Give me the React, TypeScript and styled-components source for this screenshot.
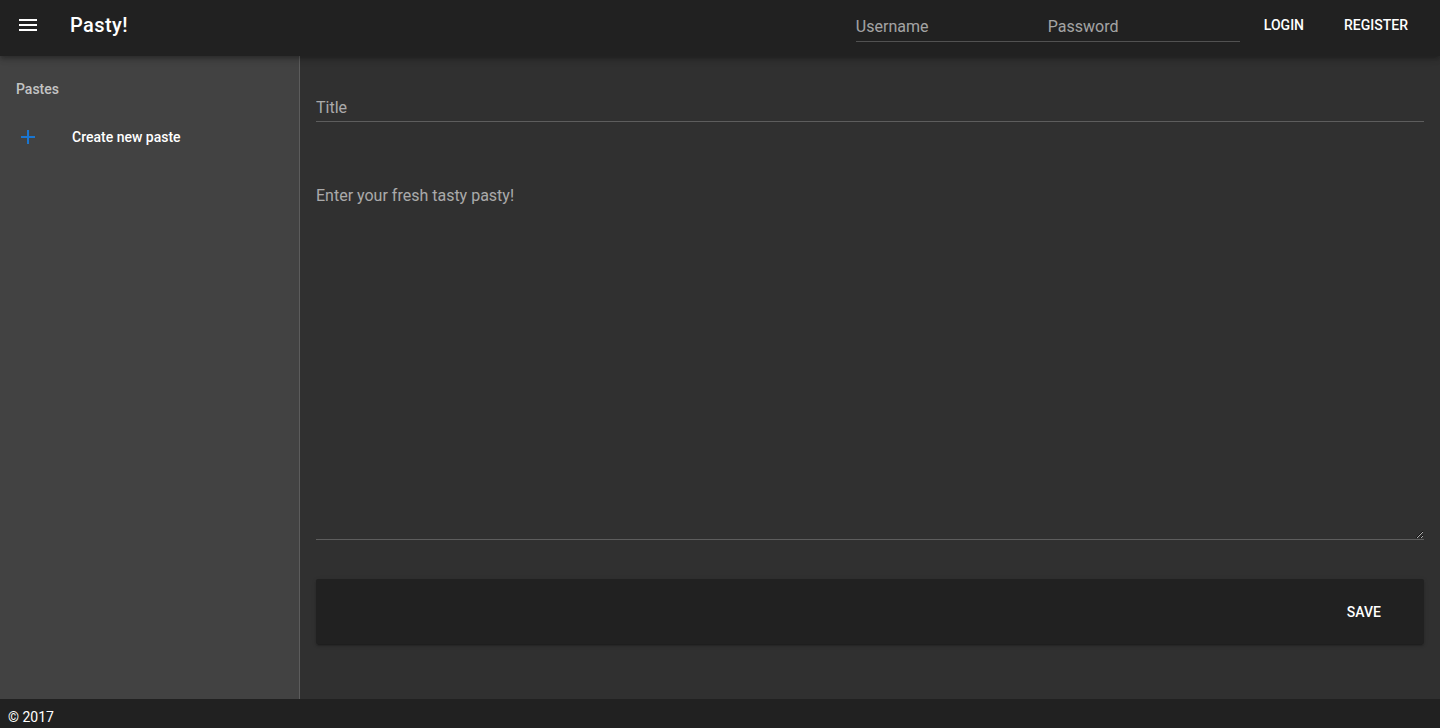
import styled, { createGlobalStyle } from 'styled-components';

const GlobalStyle = createGlobalStyle`
  html, body {
    margin: 0;
    padding: 0;
    height: 100%;
    background: #303030;
    font-family: Roboto, 'Noto Sans', sans-serif;
    color: #fff;
  }
  #root {
    height: 100%;
  }
  * {
    box-sizing: border-box;
  }
`;

const Page = styled.div`
  display: flex;
  flex-direction: column;
  height: 100vh;
`;

const Toolbar = styled.header`
  position: relative;
  z-index: 2;
  display: flex;
  align-items: center;
  height: 56px;
  flex-shrink: 0;
  padding: 0 16px 6px;
  background: #212121;
  box-shadow: 0 2px 4px -1px rgba(0, 0, 0, 0.2), 0 4px 5px 0 rgba(0, 0, 0, 0.14),
    0 1px 10px 0 rgba(0, 0, 0, 0.12);
`;

const MenuButton = styled.button`
  display: flex;
  align-items: center;
  justify-content: center;
  width: 24px;
  height: 24px;
  padding: 0;
  border: none;
  background: transparent;
  color: #fff;
  cursor: pointer;
`;

const Brand = styled.div`
  margin-left: 30px;
  font-size: 20px;
  font-weight: 500;
  letter-spacing: 0.02em;
`;

const Spacer = styled.div`
  flex: 1;
`;

const LoginFields = styled.div`
  display: flex;
  height: 34px;
  border-bottom: 1px solid rgba(255, 255, 255, 0.22);
`;

const TopInput = styled.input`
  width: 192px;
  height: 100%;
  padding: 4px 0 0;
  border: none;
  background: transparent;
  font-family: inherit;
  font-size: 16px;
  color: #fff;
  outline: none;
  &::placeholder {
    color: rgba(255, 255, 255, 0.6);
  }
`;

const FlatButton = styled.button`
  height: 36px;
  margin-left: 8px;
  padding: 0 16px;
  border: none;
  background: transparent;
  font-family: inherit;
  font-size: 14px;
  font-weight: 500;
  text-transform: uppercase;
  color: #fff;
  cursor: pointer;
`;

const Body = styled.div`
  display: flex;
  flex: 1;
  min-height: 0;
`;

const Sidebar = styled.aside`
  width: 300px;
  flex-shrink: 0;
  padding-top: 9px;
  background: #424242;
  border-right: 1px solid rgba(255, 255, 255, 0.14);
`;

const Subheader = styled.div`
  display: flex;
  align-items: center;
  height: 48px;
  padding: 0 16px;
  font-size: 14px;
  font-weight: 500;
  color: rgba(255, 255, 255, 0.7);
`;

const Tile = styled.a`
  display: flex;
  align-items: center;
  height: 48px;
  padding: 0 16px;
  font-size: 14px;
  font-weight: 500;
  color: #fff;
  text-decoration: none;
  cursor: pointer;
`;

const TileIcon = styled.div`
  display: flex;
  align-items: center;
  width: 56px;
  color: #1976d2;
`;

const Main = styled.main`
  flex: 1;
  padding: 0 16px;
  display: flex;
  flex-direction: column;
`;

const TitleInput = styled.input`
  width: 100%;
  height: 32px;
  margin-top: 34px;
  padding: 4px 0 0;
  border: none;
  border-bottom: 1px solid rgba(255, 255, 255, 0.22);
  background: transparent;
  font-family: inherit;
  font-size: 16px;
  color: #fff;
  outline: none;
  &::placeholder {
    color: rgba(255, 255, 255, 0.6);
  }
`;

const PasteArea = styled.textarea`
  width: 100%;
  height: 356px;
  margin-top: 62px;
  padding: 0;
  border: none;
  border-bottom: 1px solid rgba(255, 255, 255, 0.22);
  background: transparent;
  font-family: inherit;
  font-size: 16px;
  line-height: 24px;
  color: #fff;
  outline: none;
  resize: vertical;
  color-scheme: dark;
  &::placeholder {
    color: rgba(255, 255, 255, 0.6);
  }
`;

const ActionCard = styled.div`
  display: flex;
  align-items: center;
  justify-content: flex-end;
  height: 65px;
  margin-top: 39px;
  padding: 0 27px 0 8px;
  background: #212121;
  border-radius: 2px;
  box-shadow: 0 3px 1px -2px rgba(0, 0, 0, 0.2), 0 2px 2px 0 rgba(0, 0, 0, 0.14),
    0 1px 5px 0 rgba(0, 0, 0, 0.12);
`;

const SaveButton = styled.button`
  height: 36px;
  padding: 0 16px;
  border: none;
  background: transparent;
  font-family: inherit;
  font-size: 14px;
  font-weight: 500;
  text-transform: uppercase;
  color: #fff;
  cursor: pointer;
`;

const Footer = styled.footer`
  height: 29px;
  flex-shrink: 0;
  padding: 8px 8px 0;
  background: #212121;
  font-size: 14px;
  line-height: 20px;
  color: #fff;
`;

function App() {
  return (
    <Page>
      <GlobalStyle />
      <Toolbar>
        <MenuButton aria-label="menu">
          <svg width="24" height="24" viewBox="0 0 24 24">
            <path d="M3 18h18v-2H3v2zm0-5h18v-2H3v2zm0-7v2h18V6H3z" fill="currentColor" />
          </svg>
        </MenuButton>
        <Brand>Pasty!</Brand>
        <Spacer />
        <LoginFields>
          <TopInput placeholder="Username" />
          <TopInput type="password" placeholder="Password" />
        </LoginFields>
        <FlatButton>Login</FlatButton>
        <FlatButton>Register</FlatButton>
      </Toolbar>
      <Body>
        <Sidebar>
          <Subheader>Pastes</Subheader>
          <Tile>
            <TileIcon>
              <svg width="24" height="24" viewBox="0 0 24 24">
                <path d="M19 13h-6v6h-2v-6H5v-2h6V5h2v6h6v2z" fill="currentColor" />
              </svg>
            </TileIcon>
            Create new paste
          </Tile>
        </Sidebar>
        <Main>
          <TitleInput placeholder="Title" />
          <PasteArea placeholder="Enter your fresh tasty pasty!" />
          <ActionCard>
            <SaveButton>Save</SaveButton>
          </ActionCard>
        </Main>
      </Body>
      <Footer>© 2017</Footer>
    </Page>
  );
}

export default App;
